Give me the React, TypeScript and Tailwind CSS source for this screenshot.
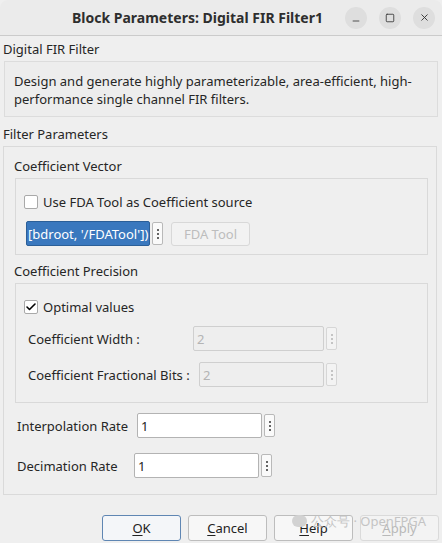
import { Minus, Square, X, Check } from "lucide-react"

// Small "…" button that sits beside each edit field
function DotsButton({ disabled = false }: { disabled?: boolean }) {
  return (
    <div
      className={`w-[11px] h-[23px] ml-[2px] rounded-[2px] border flex flex-col items-center justify-center gap-[2px] ${
        disabled ? "border-[#d6d6d6] bg-[#f3f3f3]" : "border-[#b9b9b9] bg-[#fafafa]"
      }`}
    >
      {[0, 1, 2].map((i) => (
        <span key={i} className={`w-[2px] h-[2px] rounded-full ${disabled ? "bg-[#b5b5b5]" : "bg-[#333]"}`} />
      ))}
    </div>
  )
}

function Field({ value, width, disabled = false }: { value: string; width: number; disabled?: boolean }) {
  return (
    <div className="flex items-center">
      <div
        style={{ width }}
        className={`h-[25px] rounded-[2px] border px-[3px] flex items-center ${
          disabled ? "border-[#cfcfcf] bg-[#eeeeee] text-[#b4b4b4]" : "border-[#b3b3b3] bg-white text-[#222]"
        }`}
      >
        {value}
      </div>
      <DotsButton disabled={disabled} />
    </div>
  )
}

function CheckBox({ checked }: { checked: boolean }) {
  return (
    <div className="w-[14px] h-[14px] border border-[#a9a9a9] bg-white rounded-[2px] flex items-center justify-center">
      {checked && <Check className="w-[12px] h-[12px] text-black" strokeWidth={3.2} />}
    </div>
  )
}

function DialogButton({ label, underline, primary = false, disabled = false }: { label: string; underline: string; primary?: boolean; disabled?: boolean }) {
  return (
    <div
      className={`w-[79px] h-[26px] rounded-[3px] border flex items-center justify-center ${
        primary ? "border-[#5f86b3] bg-[#f4f6f9]" : disabled ? "border-[#dadada] bg-[#f3f3f3]" : "border-[#bdbdbd] bg-[#f7f7f7]"
      } ${disabled ? "text-[#b8b8b8]" : "text-[#222]"}`}
    >
      <span>
        <span className="underline underline-offset-2">{underline}</span>
        {label.slice(underline.length)}
      </span>
    </div>
  )
}

export default function App() {
  return (
    <div
      className="relative w-[442px] h-[543px] overflow-hidden bg-[#efefef] text-[13px] leading-[18px] text-[#262626]"
      style={{ fontFamily: '"Noto Sans", "Open Sans", sans-serif' }}
    >
      {/* Title bar */}
      <div className="h-[36px] border-b border-[#cbcbcb] bg-[#ebebeb] flex items-center rounded-t-[8px]">
        <div className="pl-[72px] text-[14px] font-bold text-[#2e2e2e]">Block Parameters: Digital FIR Filter1</div>
        <div className="ml-auto mr-[7px] flex items-center gap-[12px]">
          <div className="w-[22px] h-[22px] rounded-full bg-[#dedede] flex items-center justify-center">
            <Minus className="w-[10px] h-[10px] text-[#333] translate-y-[3px]" strokeWidth={2} />
          </div>
          <div className="w-[22px] h-[22px] rounded-full bg-[#dedede] flex items-center justify-center">
            <Square className="w-[10px] h-[10px] text-[#333]" strokeWidth={2} />
          </div>
          <div className="w-[22px] h-[22px] rounded-full bg-[#dedede] flex items-center justify-center">
            <X className="w-[11px] h-[11px] text-[#333]" strokeWidth={2} />
          </div>
        </div>
      </div>

      {/* Block description */}
      <div className="pt-[4px] pl-[3px]">Digital FIR Filter</div>
      <div className="mx-[4px] mt-[3px] h-[56px] border border-[#dcdcdc] bg-[#ededed] pl-[9px] pt-[10px]">
        <div>Design and generate highly parameterizable, area-efficient, high-</div>
        <div>performance single channel FIR filters.</div>
      </div>

      {/* Parameters */}
      <div className="mt-[8px] pl-[3px]">Filter Parameters</div>
      <div className="ml-[3px] mr-[5px] mt-[3px] h-[349px] border border-[#dadada] pl-[10px] pr-[8px] pt-[10px]">
        <div>Coefficient Vector</div>
        <div className="mt-[3px] ml-[1px] h-[77px] border border-[#d9d9d9] pl-[8px] pt-[14px]">
          <div className="flex items-center gap-[5px]">
            <CheckBox checked={false} />
            <span>Use FDA Tool as Coefficient source</span>
          </div>
          <div className="mt-[10px] ml-[2px] flex items-center">
            <div className="w-[124px] h-[25px] rounded-[2px] border border-[#2b5f98] bg-[#3a78be] text-white flex items-center pl-[1px] overflow-hidden whitespace-nowrap">
              [bdroot, '/FDATool'])
            </div>
            <DotsButton />
            <div className="ml-[8px] w-[79px] h-[24px] rounded-[3px] border border-[#d8d8d8] bg-[#f2f2f2] text-[#bdbdbd] flex items-center justify-center">
              FDA Tool
            </div>
          </div>
        </div>

        <div className="mt-[7px]">Coefficient Precision</div>
        <div className="mt-[3px] ml-[1px] h-[120px] border border-[#d9d9d9] pl-[8px] pt-[14px]">
          <div className="flex items-center gap-[5px]">
            <CheckBox checked={true} />
            <span>Optimal values</span>
          </div>
          <div className="mt-[10px] ml-[4px] flex items-center">
            <span className="w-[165px]">Coefficient Width :</span>
            <Field value="2" width={131} disabled />
          </div>
          <div className="mt-[11px] ml-[4px] flex items-center">
            <span className="w-[171px]">Coefficient Fractional Bits :</span>
            <Field value="2" width={125} disabled />
          </div>
        </div>

        <div className="mt-[10px] ml-[3px] flex items-center">
          <span className="w-[120px]">Interpolation Rate</span>
          <Field value="1" width={125} />
        </div>
        <div className="mt-[15px] ml-[3px] flex items-center">
          <span className="w-[117px]">Decimation Rate</span>
          <Field value="1" width={125} />
        </div>
      </div>

      {/* Dialog buttons */}
      <div className="mt-[20px] pl-[102px] flex gap-[7px]">
        <DialogButton label="OK" underline="O" primary />
        <DialogButton label="Cancel" underline="C" />
        <DialogButton label="Help" underline="H" />
        <DialogButton label="Apply" underline="A" disabled />
      </div>

      {/* Faint account watermark over the button row */}
      <div className="absolute left-[292px] top-[512px] flex items-center gap-[4px] text-[13px] text-[#c4c4c4] pointer-events-none">
        <span className="w-[15px] h-[12px] rounded-full bg-[#d2d2d2]" />
        <span>公众号 · OpenFPGA</span>
      </div>
    </div>
  )
}
